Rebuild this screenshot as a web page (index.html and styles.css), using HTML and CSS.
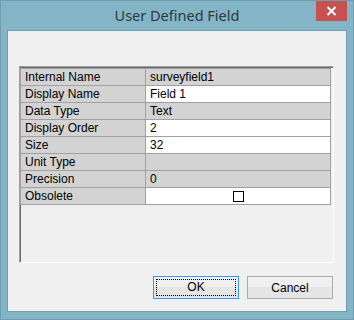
FILE: index.html
```html
<!DOCTYPE html>
<html lang="en">
<head>
    <meta charset="UTF-8">
    <title>User Defined Field</title>
    <link rel="stylesheet" href="styles.css">
</head>
<body>
    <div class="window">
        <div class="titlebar">
            <div class="title">User Defined Field</div>
            <div class="close">
                <svg width="11" height="10" viewBox="0 0 11 10">
                    <path d="M1.5 1 L9.5 9 M9.5 1 L1.5 9" stroke="#fff" stroke-width="2"/>
                </svg>
            </div>
        </div>
        <div class="client">
            <div class="grid-box">
                <table class="grid">
                    <tr><td class="label">Internal Name</td><td class="value ro">surveyfield1</td></tr>
                    <tr><td class="label">Display Name</td><td class="value">Field 1</td></tr>
                    <tr><td class="label">Data Type</td><td class="value ro">Text</td></tr>
                    <tr><td class="label">Display Order</td><td class="value">2</td></tr>
                    <tr><td class="label">Size</td><td class="value">32</td></tr>
                    <tr><td class="label">Unit Type</td><td class="value ro"></td></tr>
                    <tr><td class="label">Precision</td><td class="value ro">0</td></tr>
                    <tr><td class="label">Obsolete</td><td class="value check"><span class="box"></span></td></tr>
                </table>
            </div>
            <div class="buttons">
                <button class="btn default"><span class="focus">OK</span></button>
                <button class="btn">Cancel</button>
            </div>
        </div>
    </div>
</body>
</html>
```

FILE: styles.css
```css
body {
    margin: 0;
    font-family: "Liberation Sans", Arial, sans-serif;
    font-size: 12px;
    color: #000;
}
.window {
    width: 354px;
    height: 320px;
    box-sizing: border-box;
    background: #83b5c6;
    border: 1px solid #6e9fb0;
    display: flex;
    flex-direction: column;
}
.titlebar {
    height: 29px;
    position: relative;
    display: flex;
    justify-content: center;
}
.title {
    font-family: "Noto Sans", sans-serif;
    font-size: 14.5px;
    color: #2b3a40;
    line-height: 28px;
}
.close {
    position: absolute;
    top: 0;
    right: 6px;
    width: 31px;
    height: 20px;
    background: #c75050;
    display: flex;
    align-items: center;
    justify-content: center;
}
.client {
    flex: 1;
    margin: 0 6px 7px 6px;
    border: 1px solid #6e9fb0;
    background: #f0f0f0;
    padding: 35px 12px 0 11px;
    display: flex;
    flex-direction: column;
}
.grid-box {
    height: 197px;
    box-sizing: border-box;
    border: 1px solid;
    border-color: #a0a0a0 #fff #fff #a0a0a0;
    box-shadow: inset 1px 1px 0 #696969;
    padding: 1px 2px 0 0;
}
.grid {
    border-collapse: collapse;
    width: 311px;
    margin-left: 0;
}
.grid td {
    border: 1px solid #a0a0a0;
    height: 16px;
    padding: 0 0 0 4px;
    line-height: 16px;
    white-space: nowrap;
}
.grid .label {
    width: 120px;
    background: #d3d3d3;
}
.grid .value {
    background: #fff;
}
.grid .value.ro {
    background: #d3d3d3;
}
.grid .check {
    text-align: center;
    padding: 0;
}
.box {
    display: inline-block;
    width: 9px;
    height: 9px;
    border: 1px solid #000;
    vertical-align: -2px;
}
.buttons {
    display: flex;
    justify-content: flex-end;
    gap: 8px;
    margin-top: 13px;
    padding-right: 1px;
}
.btn {
    width: 86px;
    height: 23px;
    box-sizing: border-box;
    border: 1px solid #acacac;
    background: linear-gradient(#f0f0f0 50%, #e5e5e5 50%);
    font-family: "Liberation Sans", Arial, sans-serif;
    font-size: 12px;
    color: #000;
    padding: 0;
    margin: 0;
}
.btn.default {
    border-color: #3399ff;
    padding: 2px;
}
.focus {
    display: block;
    height: 100%;
    box-sizing: border-box;
    border: 1px dotted #000;
    line-height: 15px;
}
```
